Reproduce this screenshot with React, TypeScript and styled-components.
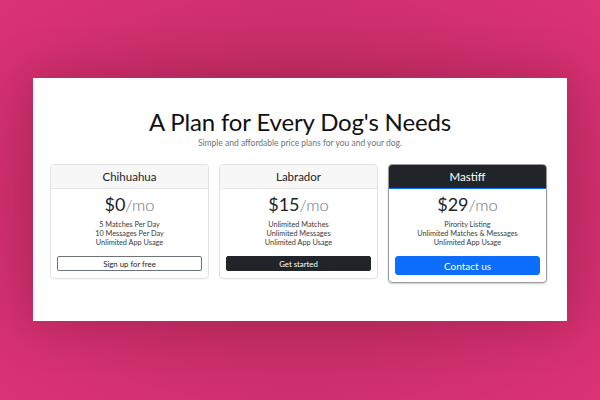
import React from 'react'
import styled, { createGlobalStyle } from 'styled-components'

const GlobalStyle = createGlobalStyle`
  html, body {
    margin: 0;
    padding: 0;
  }
  body {
    background: #e4347b;
    font-family: Lato, 'Open Sans', Arial, sans-serif;
    color: #212529;
  }
`

const Page = styled('div')`
  box-sizing: border-box;
  width: 600px;
  height: 400px;
  padding: 78px 33px 79px;
  overflow: hidden;
  background: radial-gradient(
    ellipse 80% 75% at 50% 50%,
    #b92a5f 0%,
    #c42d66 45%,
    #d8317322 100%
  ),
    #e4347b;
`

const Panel = styled('main')`
  height: 243px;
  background: #fff;
  box-shadow: 0 0 40px 6px rgba(110, 10, 50, 0.25);
  display: flex;
  flex-direction: column;
  align-items: center;
`

const Title = styled('h1')`
  margin: 28px 0 0;
  font-size: 24px;
  line-height: 32px;
  font-weight: 400;
  letter-spacing: -0.15px;
  color: #111;
`

const Subtitle = styled('p')`
  margin: 0;
  font-size: 8.5px;
  line-height: 10px;
  color: #6c757d;
`

const CardRow = styled('div')`
  margin-top: 16px;
  align-self: stretch;
  padding-left: 17px;
  display: grid;
  grid-template-columns: repeat(3, 159px);
  gap: 10px;
  align-items: start;
`

interface CardProps {
  featured?: boolean
}

const Card = styled('section')<CardProps>`
  box-sizing: border-box;
  border: 1px solid ${({ featured }) => (featured ? '#9a9a9a' : '#e2e2e2')};
  border-radius: 4px;
  overflow: hidden;
  box-shadow: ${({ featured }) =>
    featured ? '0 1px 2px rgba(0, 0, 0, 0.2)' : '0 1px 2px rgba(0, 0, 0, 0.04)'};
`

const CardHeader = styled('header')<CardProps>`
  height: 23px;
  display: flex;
  align-items: center;
  justify-content: center;
  font-size: 11.5px;
  background: ${({ featured }) => (featured ? '#212529' : '#f7f7f7')};
  color: ${({ featured }) => (featured ? '#fff' : '#212529')};
  border-bottom: 1px solid ${({ featured }) => (featured ? '#0d6efd' : '#e6e6e6')};
`

const CardBody = styled('div')`
  padding: 3px 6px 7px;
  display: flex;
  flex-direction: column;
  align-items: center;
`

const Price = styled('div')`
  font-size: 18px;
  line-height: 24px;
  color: #212529;
`

const Per = styled('small')`
  font-size: 16.5px;
  font-weight: 300;
  color: #6c757d;
`

const Features = styled('ul')`
  list-style: none;
  margin: 3px 0 0;
  padding: 0;
  font-size: 7.3px;
  line-height: 9px;
  color: #3a3a3a;
  text-align: center;
`

type Variant = 'outline' | 'dark' | 'primary'

const Button = styled('button')<{ variant: Variant; large?: boolean }>`
  box-sizing: border-box;
  margin-top: 9px;
  width: 100%;
  height: ${({ large }) => (large ? '19px' : '15px')};
  padding: 0;
  border-radius: ${({ large }) => (large ? '3px' : '2px')};
  font-family: inherit;
  font-size: ${({ large }) => (large ? '10px' : '7.8px')};
  border: 1px solid
    ${({ variant }) =>
      variant === 'outline' ? '#6c757d' : variant === 'dark' ? '#212529' : '#0d6efd'};
  background: ${({ variant }) =>
    variant === 'outline' ? '#fff' : variant === 'dark' ? '#212529' : '#0d6efd'};
  color: ${({ variant }) => (variant === 'outline' ? '#212529' : '#fff')};
  cursor: pointer;
`

interface Plan {
  name: string
  price: number
  features: string[]
  cta: string
  variant: Variant
  featured?: boolean
}

const plans: Plan[] = [
  {
    name: 'Chihuahua',
    price: 0,
    features: ['5 Matches Per Day', '10 Messages Per Day', 'Unlimited App Usage'],
    cta: 'Sign up for free',
    variant: 'outline',
  },
  {
    name: 'Labrador',
    price: 15,
    features: ['Unlimited Matches', 'Unlimited Messages', 'Unlimited App Usage'],
    cta: 'Get started',
    variant: 'dark',
  },
  {
    name: 'Mastiff',
    price: 29,
    features: ['Pirority Listing', 'Unlimited Matches & Messages', 'Unlimited App Usage'],
    cta: 'Contact us',
    variant: 'primary',
    featured: true,
  },
]

export default function App() {
  return (
    <>
      <GlobalStyle />
      <Page>
        <Panel>
          <Title>A Plan for Every Dog's Needs</Title>
          <Subtitle>Simple and affordable price plans for you and your dog.</Subtitle>
          <CardRow>
            {plans.map(plan => (
              <Card key={plan.name} featured={plan.featured}>
                <CardHeader featured={plan.featured}>{plan.name}</CardHeader>
                <CardBody>
                  <Price>
                    ${plan.price}
                    <Per>/mo</Per>
                  </Price>
                  <Features>
                    {plan.features.map(f => (
                      <li key={f}>{f}</li>
                    ))}
                  </Features>
                  <Button variant={plan.variant} large={plan.featured}>
                    {plan.cta}
                  </Button>
                </CardBody>
              </Card>
            ))}
          </CardRow>
        </Panel>
      </Page>
    </>
  )
}
